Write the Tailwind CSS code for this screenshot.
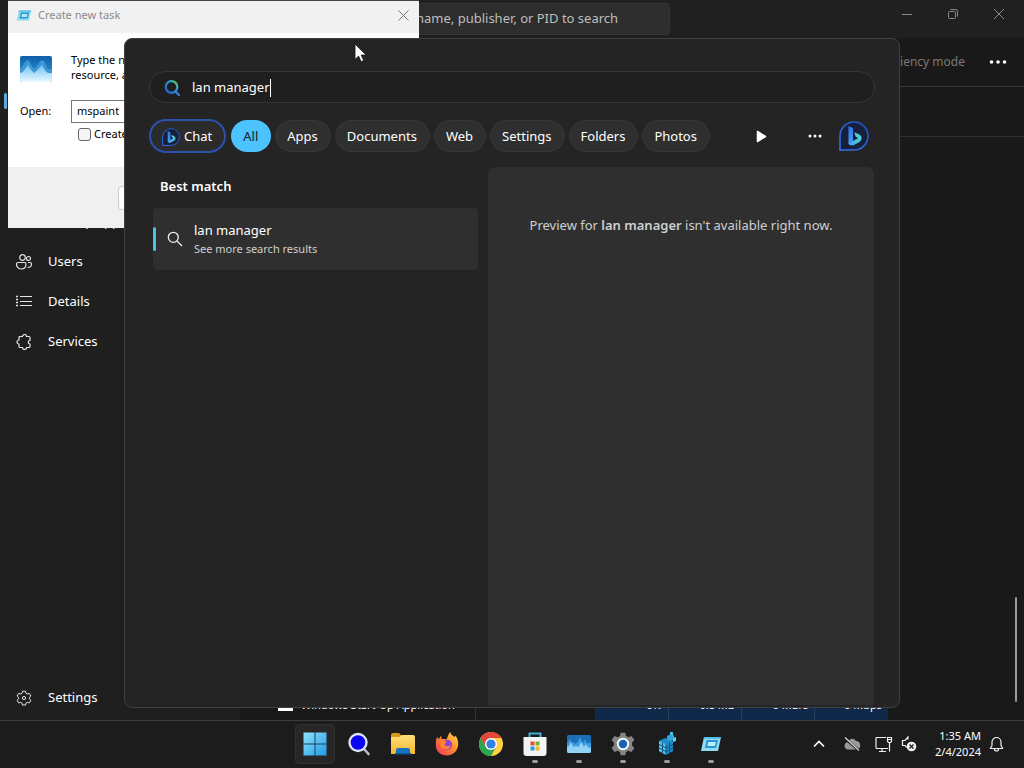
<!DOCTYPE html>
<html lang="en">
<head>
<meta charset="utf-8">
<title>Desktop search</title>
<script src="https://cdn.jsdelivr.net/npm/@tailwindcss/browser@4"></script>
</head>
<body class="h-screen overflow-hidden bg-[#1c1c1c] font-['Noto_Sans','Open_Sans',sans-serif] text-[13px] text-white">
<svg width="0" height="0" class="absolute" aria-hidden="true">
  <defs>
    <linearGradient id="bingRing" x1="1" y1="0" x2="0" y2="1"><stop offset="0" stop-color="#1e4fc0"/><stop offset="1" stop-color="#3572ea"/></linearGradient>
    <linearGradient id="bingStem" x1="0" y1="0" x2="0" y2="1"><stop offset="0" stop-color="#2c74e6"/><stop offset="1" stop-color="#4a9bf5"/></linearGradient>
    <linearGradient id="bingBowl" x1="0" y1="1" x2="1" y2="0"><stop offset="0" stop-color="#3f9cf8"/><stop offset="1" stop-color="#5fe0c4"/></linearGradient>
    <linearGradient id="lens" x1="0" y1="1" x2="1" y2="0"><stop offset="0" stop-color="#1e5fd0"/><stop offset=".6" stop-color="#2793d0"/><stop offset="1" stop-color="#6fd06a"/></linearGradient>
    <linearGradient id="win" x1="0" y1="0" x2="1" y2="1"><stop offset="0" stop-color="#8fe3fb"/><stop offset="1" stop-color="#1d9be6"/></linearGradient>
    <linearGradient id="sky" x1="0" y1="0" x2="0" y2="1"><stop offset="0" stop-color="#0f5fa8"/><stop offset="1" stop-color="#2fa3e6"/></linearGradient>
    <linearGradient id="wave" x1="0" y1="0" x2="0" y2="1"><stop offset="0" stop-color="#6fc4f2"/><stop offset="1" stop-color="#e9f8ff"/></linearGradient>
    <linearGradient id="fold" x1="0" y1="0" x2="0" y2="1"><stop offset="0" stop-color="#ffe07a"/><stop offset="1" stop-color="#f3b62f"/></linearGradient>
    <linearGradient id="fox" x1="1" y1="0" x2="0" y2="1"><stop offset="0" stop-color="#ffe14a"/><stop offset=".45" stop-color="#ff8a2b"/><stop offset="1" stop-color="#f0315f"/></linearGradient>
    <symbol id="bing" viewBox="0 0 30 30">
      <path d="M15 1a14 14 0 1 1 0 28H1V15A14 14 0 0 1 15 1Z" fill="#16203a" stroke="url(#bingRing)" stroke-width="1.600"/>
      <path d="M9.500 5l4.500 2v14l-3 3.500-1.500-2Z" fill="url(#bingStem)"/>
      <path d="M9.500 21.500c1 3 3.500 3.500 5.500 2.500l5.500-3c3-2 2.700-6-.3-7.400l-5-2.300 1.600 4.400 2.400 1.300-5.200 3-2.500 2Z" fill="url(#bingBowl)"/>
    </symbol>
    <symbol id="taskwin" viewBox="0 0 22 18">
      <path d="M4 2h17l-3 14H1Z" fill="#8fdcf5"/><path d="M6.600 5H18l-1.800 8H4.900Z" fill="#2f93cf"/><path d="M8.200 7h7.600l-.9 4H7.300Z" fill="#b5ecfa"/><path d="M4 2h17l-.4 1.800H3.600Z" fill="#4dbbe4"/>
    </symbol>
    <symbol id="perf" viewBox="0 0 32 26">
      <rect x="0" y="0" width="32" height="26" rx="2" fill="url(#sky)"/>
      <path d="M0 13c3-1 4-8 7.500-9 3 1 4 7 6.500 9 3-1 5-8 8-9 3.500 1 4 7 6 9h4v12H0Z" fill="#3e97d4"/>
      <path d="M0 17c3 0 5-4 8-8 2 4 4 6 6 8 3-2 5-5 8-8 2 4 4 7 6 8h4v7q0 2-2 2H2q-2 0-2-2Z" fill="url(#wave)"/>
    </symbol>
    <symbol id="perfTask" viewBox="0 0 24 18">
      <rect width="24" height="18" rx="1.500" fill="#1b6fb8"/>
      <path d="M0 8l1.500-1 1.500-3 2 4 1.500-1 2 2 2-2 2.500-5 3 6 2-3.500 2 4 4-1V16q0 2-2 2H2q-2 0-2-2Z" fill="#3c9bdc"/>
      <path d="M0 12l2-1 2-4 2.500 5 2.500-1 2.500 1 2.500-5 3 5 2-3 2 3.500h3V16q0 2-2 2H2q-2 0-2-2Z" fill="#8fd2f5"/>
    </symbol>
    <symbol id="gearline" viewBox="0 0 16 16">
      <path d="M6.500 1.200h3l.5 2 1.400.8 2-.6 1.500 2.600-1.500 1.400v1.500l1.500 1.400-1.500 2.600-2-.6-1.400.8-.5 2h-3l-.5-2-1.400-.8-2 .6-1.500-2.600 1.500-1.400V7.400L1.100 6l1.500-2.600 2 .6L6 3.200Z" fill="none" stroke="#e4e4e4" stroke-linejoin="round"/><circle cx="8" cy="8" r="1.600" fill="none" stroke="#e4e4e4"/>
    </symbol>
  </defs>
</svg>

<div class="flex h-full flex-col">
  <div class="relative min-h-0 flex-1 overflow-hidden">

    <!-- Task Manager window -->
    <section class="flex h-full flex-col bg-[#191919]" aria-label="Task Manager">
      <header class="flex h-[38px] shrink-0 items-center justify-between bg-[#202020]">
        <label class="ml-[300px] flex h-8 w-[370px] items-center rounded border border-[#353535] bg-[#2d2d2d]">
          <input type="text" aria-label="Search processes" placeholder="Type a name, publisher, or PID to search" class="ml-12 w-full bg-transparent pl-6 outline-none placeholder:text-[#bebebe]">
        </label>
        <div class="mr-0.5 mb-2.5 flex text-[#8a8a8a]">
          <button aria-label="Minimize" class="grid w-[46px] place-items-center"><svg width="12" height="12" viewBox="0 0 12 12" stroke="currentColor"><path d="M1 6.500h10"/></svg></button>
          <button aria-label="Restore" class="grid w-[46px] place-items-center"><svg width="12" height="12" viewBox="0 0 12 12" fill="none" stroke="currentColor"><rect x="1.500" y="3.500" width="7" height="7" rx="1"/><path d="M3.500 1.500h5a2 2 0 0 1 2 2v5"/></svg></button>
          <button aria-label="Close" class="grid w-[46px] place-items-center"><svg width="12" height="12" viewBox="0 0 12 12" stroke="currentColor"><path d="M1 1l10 10M11 1L1 11"/></svg></button>
        </div>
      </header>
      <div class="flex min-h-0 flex-1">
        <nav class="flex w-60 shrink-0 flex-col bg-[#1f1f1f] pb-0.5">
          <div class="mt-[55px] ml-1 h-4 w-[3px] rounded-full bg-[#5fa8dc]"></div>
          <div class="h-[93px]"></div>
          <a href="#" class="flex h-10 items-center pl-12">Startup apps</a>
          <a href="#" class="flex h-10 items-center gap-4 pl-4"><svg width="16" height="16" viewBox="0 0 16 16" fill="none" stroke="#e4e4e4" stroke-width="1.200"><circle cx="6.500" cy="3.500" r="2.800"/><circle cx="12.500" cy="4.500" r="2"/><path d="M2 8.500h6.500a1.500 1.500 0 0 1 1.500 1.500c0 3-2 5-4.700 5S.5 13 .5 10A1.500 1.500 0 0 1 2 8.500ZM12 8.500h2a1.500 1.500 0 0 1 1.500 1.500c0 2-1.500 3.500-4 3.500"/></svg>Users</a>
          <a href="#" class="flex h-10 items-center gap-4 pl-4"><svg width="16" height="16" viewBox="0 0 16 16" stroke="#e4e4e4"><path d="M4 2.500h12M4 7.500h12M4 11.500h12"/><path d="M0 2.500h2M0 5.500h2M0 8.500h2M0 11.500h2" stroke-width="1.500"/></svg>Details</a>
          <a href="#" class="flex h-10 items-center gap-4 pl-4"><svg width="16" height="16" viewBox="0 0 16 16" fill="none" stroke="#e4e4e4" stroke-width="1.200" stroke-linejoin="round"><path d="M4 2.500h2.500a2 2 0 0 1 4 0H13q1 0 1 1v3a1.700 1.700 0 0 0 0 3.500v2.500q0 1-1 1h-2.500a2 2 0 0 1-4 0H4q-1 0-1-1V10a2 2 0 0 1 0-4V3.500q0-1 1-1Z"/></svg>Services</a>
          <a href="#" class="mt-auto flex h-10 items-center gap-4 pl-4"><svg width="16" height="16"><use href="#gearline"/></svg>Settings</a>
        </nav>
        <main class="flex min-w-0 flex-1 flex-col">
          <div class="flex h-[49px] items-center justify-end gap-6 border-b border-[#353535] pr-[17px]">
            <button class="text-xs text-[#7a7a7a]" disabled>Efficiency mode</button>
            <button aria-label="More options"><svg width="18" height="4" viewBox="0 0 18 4" fill="#fff"><circle cx="2.500" cy="2" r="1.800"/><circle cx="9" cy="2" r="1.800"/><circle cx="15.500" cy="2" r="1.800"/></svg></button>
          </div>
          <div class="h-[50px] border-b border-[#303030]"></div>
          <div class="flex min-h-0 flex-1 items-end justify-between">
            <table class="w-[648px] table-fixed border-collapse text-[11px]">
              <tr class="h-[30px]">
                <td class="w-[235px] border-r border-[#333] p-0"><div class="flex items-center gap-2 pl-[38px]"><svg width="15" height="12" viewBox="0 0 15 12"><path fill="#fff" d="M0 0h15v12H0z"/><path fill="#2e6ea5" d="M4 5h6v4H4z"/></svg><span class="whitespace-nowrap">Windows Start-Up Application</span></div></td>
                <td class="w-[120px] p-0"></td>
                <td class="border-r border-[#24405e] bg-[#10284a] pr-1.5 text-right">0%</td>
                <td class="border-r border-[#24405e] bg-[#10284a] pr-1.5 text-right">0.8 MB</td>
                <td class="border-r border-[#24405e] bg-[#10284a] pr-1.5 text-right">0 MB/s</td>
                <td class="bg-[#10284a] pr-1.5 text-right">0 Mbps</td>
              </tr>
            </table>
            <div class="mr-[7px] mb-[18px] h-[105px] w-0.5 rounded bg-[#9b9b9b]"></div>
          </div>
        </main>
      </div>
    </section>

    <!-- Create new task dialog -->
    <section class="absolute top-0 left-2 flex h-[228px] w-[411px] flex-col border-t border-[#444] bg-white text-[11px] text-black" aria-label="Create new task">
      <header class="flex h-8 shrink-0 items-center gap-1.5 bg-[#f1f1f1] pr-2.5 pb-[3px] pl-2 text-[#8b8b8b]">
        <svg width="16" height="13"><use href="#taskwin"/></svg><h2>Create new task</h2>
        <button aria-label="Close dialog" class="ml-auto"><svg width="11" height="11" viewBox="0 0 11 11" stroke="#777"><path d="M.5.5l10 10M10.500.5l-10 10"/></svg></button>
      </header>
      <div class="flex-1 px-3 pt-[19px]">
        <div class="flex gap-[19px]"><svg width="32" height="32" viewBox="0 0 32 32" class="shrink-0"><use href="#perf" y="4" width="32" height="26"/></svg><p class="leading-[15px]">Type the name of a program, folder, document, or Internet resource, and Windows will open it for you.</p></div>
        <div class="mt-4 flex items-center"><label for="open" class="w-[51px]">Open:</label><select id="open" class="h-[23px] w-[320px] appearance-none border border-[#767676] bg-white px-[5px]"><option>mspaint</option></select></div>
        <label class="mt-[3px] ml-[58px] flex items-center gap-[3px]"><input type="checkbox" class="size-[13px] appearance-none rounded-[3px] border border-[#666] bg-[#f5f5f5]">Create</label>
      </div>
      <footer class="h-[61px] bg-[#f0f0f0] pt-[19px] pl-[110px]"><button class="h-6 w-[85px] rounded border border-[#ccc] bg-[#fdfdfd]" aria-label="OK"></button></footer>
    </section>

    <!-- Search flyout -->
    <section class="absolute inset-x-[124px] top-[38px] bottom-3 flex flex-col rounded-lg border border-[#404040] bg-[#242424] px-6 pt-8" aria-label="Search">
      <label class="flex h-8 shrink-0 items-center rounded-full border border-[#353535] bg-[#1f1f1f] pt-px pl-3.5">
        <svg width="16" height="16" viewBox="0 0 16 16" fill="none" stroke="url(#lens)" stroke-width="2.200" class="mr-3"><circle cx="7.500" cy="7" r="5.800"/><path d="M11.500 11.500l3.500 3.500" stroke="#3a80da" stroke-linecap="round"/></svg>
        <input type="text" aria-label="Search" value="lan manager" class="field-sizing-content bg-transparent outline-none"><span class="h-[18px] w-px bg-white"></span>
      </label>
      <div class="mt-4 flex h-[34px] shrink-0 items-center gap-1 [&>button]:shrink-0 [&>button]:pt-px">
        <button class="mr-px flex h-[34px] items-center gap-1 rounded-full border-2 border-[#2b50ae] bg-[#2b2b2b] pr-3 pl-[11px]"><svg width="18" height="18"><use href="#bing"/></svg>Chat</button>
        <button class="h-8 rounded-full bg-[#4cc2ff] pr-[13px] pl-3 text-[#10202c]">All</button>
        <button class="h-8 rounded-full border border-[#383838] bg-[#2f2f2f] pr-3 pl-[11px]">Apps</button>
        <button class="h-8 rounded-full border border-[#383838] bg-[#2f2f2f] pr-3 pl-[11px]">Documents</button>
        <button class="h-8 rounded-full border border-[#383838] bg-[#2f2f2f] pr-3 pl-[11px]">Web</button>
        <button class="h-8 rounded-full border border-[#383838] bg-[#2f2f2f] pr-3 pl-[11px]">Settings</button>
        <button class="h-8 rounded-full border border-[#383838] bg-[#2f2f2f] pr-3 pl-[11px]">Folders</button>
        <button class="h-8 rounded-full border border-[#383838] bg-[#2f2f2f] pr-3 pl-[11px]">Photos</button>
        <div class="mr-1.5 ml-auto flex items-center">
          <button aria-label="More filters" class="mr-[41px]"><svg width="11" height="13" viewBox="0 0 11 13"><path d="M1.500 1.500v10l8-5Z" fill="#fff" stroke="#fff" stroke-width="1.500" stroke-linejoin="round"/></svg></button>
          <button aria-label="Options" class="mr-[17px]"><svg width="14" height="4" viewBox="0 0 14 4" fill="#fff"><circle cx="2" cy="2" r="1.500"/><circle cx="7" cy="2" r="1.500"/><circle cx="12" cy="2" r="1.500"/></svg></button>
          <button aria-label="Bing"><svg width="30" height="30"><use href="#bing"/></svg></button>
        </div>
      </div>
      <div class="mt-3.5 flex min-h-0 flex-1 gap-2.5 pr-px pb-0.5 pl-1">
        <div class="w-[325px] shrink-0">
          <h2 class="mt-[9px] ml-[7px] leading-5 font-semibold">Best match</h2>
          <a href="#" class="mt-3 flex h-[62px] items-center rounded bg-[#2f2f2f]">
            <span class="h-6 w-[3px] rounded-full bg-[#4cc2e0]"></span>
            <svg width="16" height="16" viewBox="0 0 16 16" fill="none" stroke="#f0f0f0" stroke-width="1.300" class="mr-3 ml-[11px] shrink-0"><circle cx="6.300" cy="6.300" r="5"/><path d="M10 10l5 5"/></svg>
            <span class="-ml-px pb-px"><span class="block leading-5">lan manager</span><span class="block text-[11px] leading-[18px] text-[#cfcfcf]">See more search results</span></span>
          </a>
        </div>
        <div class="flex-1 rounded-t-lg bg-[#2f2f2f] pt-12 text-center leading-5 text-[#cfcfcf]">Preview for <b class="font-semibold">lan manager</b> isn't available right now.</div>
      </div>
    </section>

    <!-- Pointer -->
    <svg class="absolute top-[43px] left-[354px]" width="13" height="20" viewBox="0 0 13 20"><path d="M1 1v15.500l3.600-3.400 2.500 5.600 2.600-1.200-2.500-5.400h5Z" fill="#fff" stroke="#111" stroke-width=".8"/></svg>
  </div>

  <!-- Taskbar -->
  <footer class="grid h-12 shrink-0 grid-cols-[1fr_auto_1fr] items-center border-t border-[#3c3c3c] bg-[#1c1c1c] pb-px pl-px">
    <div></div>
    <div class="flex h-full items-center [&>button]:relative [&>button]:grid [&>button]:h-full [&>button]:w-11 [&>button]:place-items-center">
      <button aria-label="Start"><span class="grid size-10 place-items-center rounded border border-[#303030] bg-[#272727]"><svg width="24" height="24" viewBox="0 0 24 24" fill="url(#win)"><path d="M.5.5h23v23H.5z"/><path d="M11.500 0h1v24h-1zM0 11.500h24v1H0z" fill="#17455e"/></svg></span></button>
      <button aria-label="Search"><svg width="24" height="24" viewBox="0 0 24 24"><path d="M17 17l4.500 5" stroke="#b9bfca" stroke-width="2.600" stroke-linecap="round"/><circle cx="11" cy="10.500" r="8.500" fill="#0c05f0" stroke="#dfe3fa" stroke-width="2.400"/></svg></button>
      <button aria-label="File Explorer"><svg width="26" height="24" viewBox="0 0 26 24"><path d="M1 3q0-2 2-2h6l3 3h11q2 0 2 2v5H1Z" fill="#d9981b"/><path d="M1 5h8l3-2h11q2 0 2 2v17H1Z" fill="url(#fold)"/><path d="M6 22v-4q0-2 2-2h10q2 0 2 2v4Z" fill="#1673c2"/><path d="M5 21h16v1.500H5z" fill="#0e559e"/></svg></button>
      <button aria-label="Firefox"><svg width="24" height="24" viewBox="0 0 24 24"><path d="M12 23.500C5 23.500.8 19 .8 13c0-3 .2-6 1.200-8l2 2 2-3.500.8 3.500 5 0c1-3 1.500-5 3.500-7 .5 3 3 4 4.500 5l.6-1.500c2 2.500 2.800 5 2.800 8.500 0 6.500-5 11.500-11.200 11.500Z" fill="url(#fox)"/><circle cx="12" cy="12.800" r="5" fill="#8a3ce0"/><path d="M5.500 9c2-1 4 .2 6 .4 1 1-2 1.800-2 3.200 2 2.400 5 2 6-.2 1 5-6 6-8.500 3-2-2-2-4-1.500-6.400Z" fill="#ff8530"/></svg></button>
      <button aria-label="Chrome"><svg width="24" height="24" viewBox="0 0 24 24"><circle cx="12" cy="12" r="12" fill="#ffd043"/><path d="M1.600 6A12 12 0 0 0 12 24l5.200-9H12L6.800 15Z" fill="#2da653"/><path d="M1.600 6l5.200 9 5.200-3V6Z" fill="#2da653"/><path d="M1.600 6A12 12 0 0 1 22.400 6H12a6 6 0 0 0-5.200 9Z" fill="#e6453a"/><circle cx="12" cy="12" r="6" fill="#fff"/><circle cx="12" cy="12" r="4.600" fill="#347eea"/></svg></button>
      <button aria-label="Microsoft Store"><svg width="24" height="24" viewBox="0 0 24 24"><path d="M6.500 6V1.500h11V6" fill="none" stroke="#42acd2" stroke-width="2"/><path d="M.5 5h23v16q0 3-3 3h-17q-3 0-3-3Z" fill="#f4f4f4"/><path d="M7.500 9.500h4v4h-4z" fill="#e8502b"/><path d="M12.500 9.500h4v4h-4z" fill="#72b52a"/><path d="M7.500 14.500h4v4h-4z" fill="#20a0e3"/><path d="M12.500 14.500h4v4h-4z" fill="#f3b81f"/></svg><i class="absolute bottom-1 h-[3px] w-1.5 rounded-full bg-[#9b9b9b]"></i></button>
      <button aria-label="Performance monitor"><svg width="24" height="18"><use href="#perfTask"/></svg><i class="absolute bottom-1 h-[3px] w-1.5 rounded-full bg-[#9b9b9b]"></i></button>
      <button aria-label="Settings"><svg width="24" height="24" viewBox="0 0 24 24"><path d="M9.700.8h4.600l.8 3.300 2.200 1.100 3.200-1.300 2.900 4-2.300 2.700v2.800l2.300 2.700-2.900 4-3.200-1.300-2.200 1.100-.8 3.300H9.700l-.8-3.300-2.200-1.100-3.200 1.300-2.900-4 2.300-2.700v-2.800L.6 7.900l2.900-4 3.200 1.300 2.200-1.100Z" fill="#858585"/><circle cx="12" cy="12" r="5.200" fill="#1763b3" stroke="#eef4fa" stroke-width="2"/></svg><i class="absolute bottom-1 h-[3px] w-1.5 rounded-full bg-[#9b9b9b]"></i></button>
      <button aria-label="Registry Editor"><svg width="24" height="24" viewBox="0 0 24 24"><path d="M4 9l6-3 8 3v10l-7 4-7-4Z" fill="#1d8dc9"/><path d="M4 9l7 3v11l-7-4Z" fill="#55c5ee"/><path d="M7.500 10.500v11M4 12.500l7 3.500 7-3.500M4 16l7 3.500 7-3.500M14.500 10.500v11M11 12v11" stroke="#12537d" fill="none"/><path d="M12 4l4-2 3 1.500v4l-3.500 1.500L12 7.500Z" fill="#2fa6dd"/><path d="M15 0h3v3h-3z" fill="#4cc5f0"/><path d="M18 6l3-1v4l-3 1Z" fill="#62d0f5"/></svg><i class="absolute bottom-1 h-[3px] w-1.5 rounded-full bg-[#9b9b9b]"></i></button>
      <button aria-label="Create new task"><svg width="22" height="18"><use href="#taskwin"/></svg><i class="absolute bottom-1 h-[3px] w-1.5 rounded-full bg-[#9b9b9b]"></i></button>
    </div>
    <div class="flex items-center justify-end pr-5">
      <button aria-label="Hidden icons" class="mr-[18px]"><svg width="12" height="8" viewBox="0 0 12 8" fill="none" stroke="#fff" stroke-width="1.600"><path d="M1 6.500l5-5 5 5"/></svg></button>
      <button aria-label="Cloud sync" class="mr-3.5"><svg width="18" height="16" viewBox="0 0 18 16"><path d="M4.500 13.500a3.800 3.800 0 0 1-.3-7.300A5 5 0 0 1 13 5a4.300 4.300 0 0 1 .8 8.500Z" fill="#999"/><path d="M2 2.500l14 12" stroke="#1c1c1c" stroke-width="2.400"/><path d="M2 1.500l14 13" stroke="#ddd" stroke-width="1.100"/></svg></button>
      <button aria-label="Network" class="mr-2"><svg width="18" height="17" viewBox="0 0 18 17" fill="none" stroke="#f0f0f0" stroke-width="1.200"><path d="M11 1.500H2q-1 0-1 1v9q0 1 1 1h11M7 12.500v3M4 15.500h7M12.500 1.500h4v4l-1 1h-2l-1-1ZM14.500 6.500v9M12.500 3.500h4"/></svg></button>
      <button aria-label="Volume muted" class="mr-[18px]"><svg width="16" height="16" viewBox="0 0 16 16"><path d="M7 3.500V1L4 4.500H1.500v5H4l2 2" fill="none" stroke="#f0f0f0" stroke-width="1.200"/><circle cx="10.500" cy="10.500" r="4.800" fill="#f0f0f0"/><path d="M8.500 8.500l4 4M12.500 8.500l-4 4" stroke="#1c1c1c" stroke-width="1.200"/></svg></button>
      <button class="mr-2 text-right text-[11px] leading-4">1:35 AM<br>2/4/2024</button>
      <button aria-label="Notifications"><svg width="15" height="17" viewBox="0 0 15 17" fill="none" stroke="#f0f0f0" stroke-width="1.200" stroke-linejoin="round"><path d="M7.500 1.500A4.500 4.500 0 0 0 3 6v3.500l-1.700 3h12.400L12 9.500V6a4.500 4.500 0 0 0-4.500-4.500ZM5.500 13a2 2 0 0 0 4 0"/></svg></button>
    </div>
  </footer>
</div>
</body>
</html>
